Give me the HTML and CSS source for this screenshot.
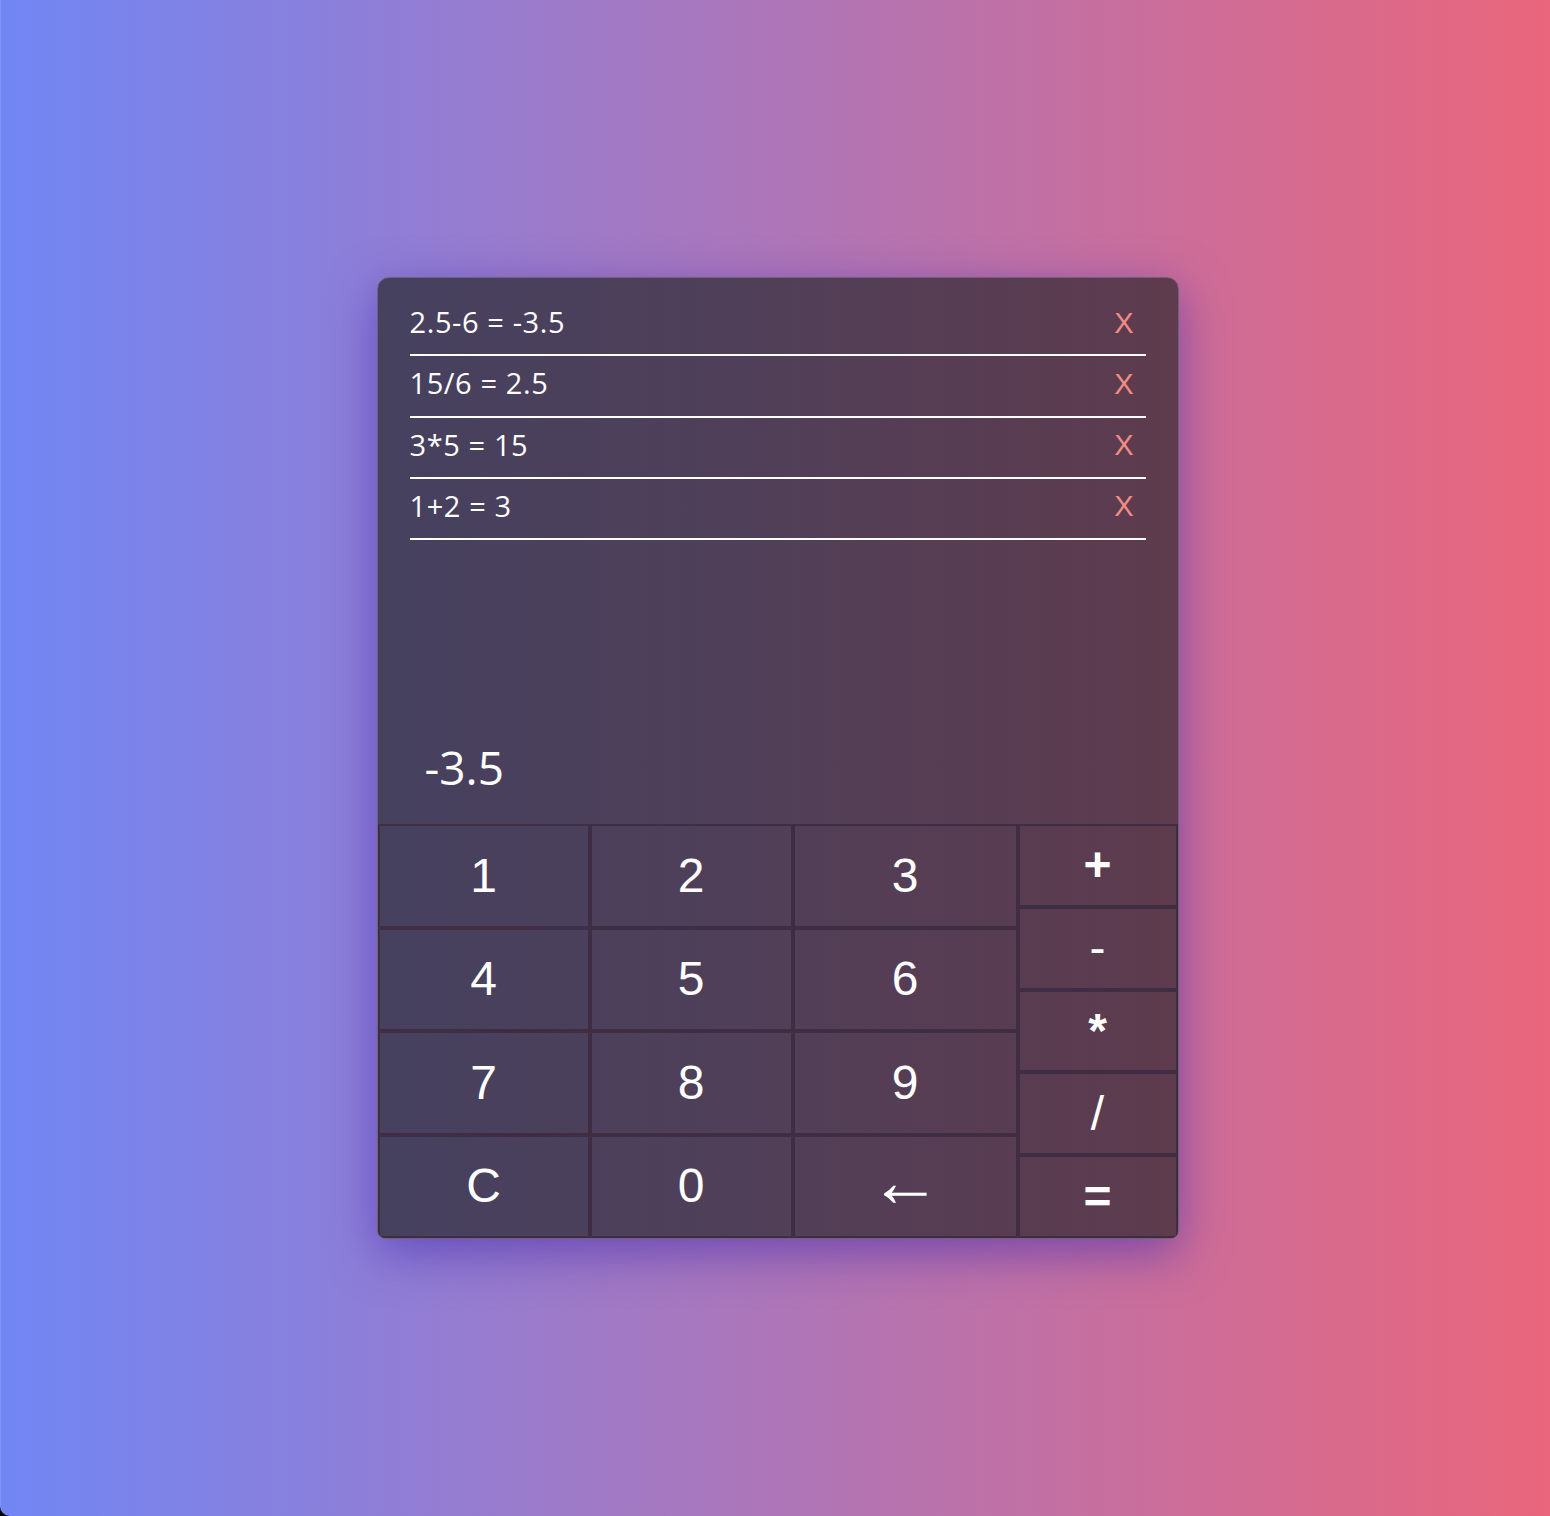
FILE: index.html
```html
<!DOCTYPE html>
<html lang="en">
<head>
<meta charset="utf-8">
<title>Calculator</title>
<link rel="stylesheet" href="styles.css">
</head>
<body>
<main class="calc">
  <ul class="history">
    <li class="entry"><span class="expr">2.5-6 = -3.5</span><button class="remove">X</button></li>
    <li class="entry"><span class="expr">15/6 = 2.5</span><button class="remove">X</button></li>
    <li class="entry"><span class="expr">3*5 = 15</span><button class="remove">X</button></li>
    <li class="entry"><span class="expr">1+2 = 3</span><button class="remove">X</button></li>
  </ul>
  <div class="display">-3.5</div>
  <div class="keypad">
    <div class="digits">
      <button class="key">1</button>
      <button class="key">2</button>
      <button class="key">3</button>
      <button class="key">4</button>
      <button class="key">5</button>
      <button class="key">6</button>
      <button class="key">7</button>
      <button class="key">8</button>
      <button class="key">9</button>
      <button class="key">C</button>
      <button class="key">0</button>
      <button class="key key-back">&larr;</button>
    </div>
    <div class="ops">
      <button class="key key-heavy">+</button>
      <button class="key">-</button>
      <button class="key key-heavy">*</button>
      <button class="key">/</button>
      <button class="key key-heavy">=</button>
    </div>
  </div>
</main>
</body>
</html>
```

FILE: styles.css
```css
* {
  box-sizing: border-box;
}

html {
  background: #000;
}

body {
  margin: 0;
  width: 1550px;
  height: 1516px;
  padding-left: 4px;
  display: flex;
  align-items: center;
  justify-content: center;
  background: linear-gradient(to right, #7186f4 0%, #e9667c 100%);
  border-left: 1px solid #8596f6;
  border-bottom-left-radius: 10px;
  font-family: "Open Sans", "Noto Sans", sans-serif;
  color: #fff;
}

.calc {
  width: 802px;
  height: 962px;
  border: 1px solid #6f6276;
  border-radius: 12px 12px 8px 8px;
  background: linear-gradient(to right, #45415f 0%, #513f58 50%, #5e3b4d 100%);
  box-shadow: 0 14px 48px rgba(70, 45, 175, 0.6);
  display: flex;
  flex-direction: column;
  overflow: hidden;
}

.history {
  list-style: none;
  margin: 0;
  padding: 17px 32px 0;
  height: 262px;
}

.entry {
  height: 61.25px;
  border-bottom: 2px solid #fff;
  display: flex;
  align-items: center;
  justify-content: space-between;
  padding-bottom: 6px;
}

.expr {
  font-size: 29px;
  letter-spacing: 0.6px;
}

.remove {
  background: none;
  border: 0;
  padding: 3px 12px 0 0;
  margin: 0;
  font-family: "Liberation Sans", Arial, sans-serif;
  font-size: 29px;
  color: #f08b86;
}

.display {
  height: 284px;
  display: flex;
  align-items: flex-end;
  padding: 0 0 27px 47px;
  font-size: 46px;
  line-height: 60px;
}

.keypad {
  height: 414px;
  display: flex;
}

.digits {
  width: 640px;
  display: grid;
  grid-template-columns: 212px 203px 225px;
  grid-template-rows: repeat(4, 1fr);
}

.ops {
  width: 160px;
  display: grid;
  grid-template-rows: repeat(5, 1fr);
}

.key {
  margin: 0;
  padding: 0;
  background: transparent;
  border: 2px solid #3f2e43;
  color: #fff;
  font-family: "Liberation Sans", Arial, sans-serif;
  font-size: 48px;
  line-height: 1;
}

.key-heavy {
  font-weight: 700;
}

.key-back {
  font-size: 72px;
  padding-bottom: 10px;
}
```
